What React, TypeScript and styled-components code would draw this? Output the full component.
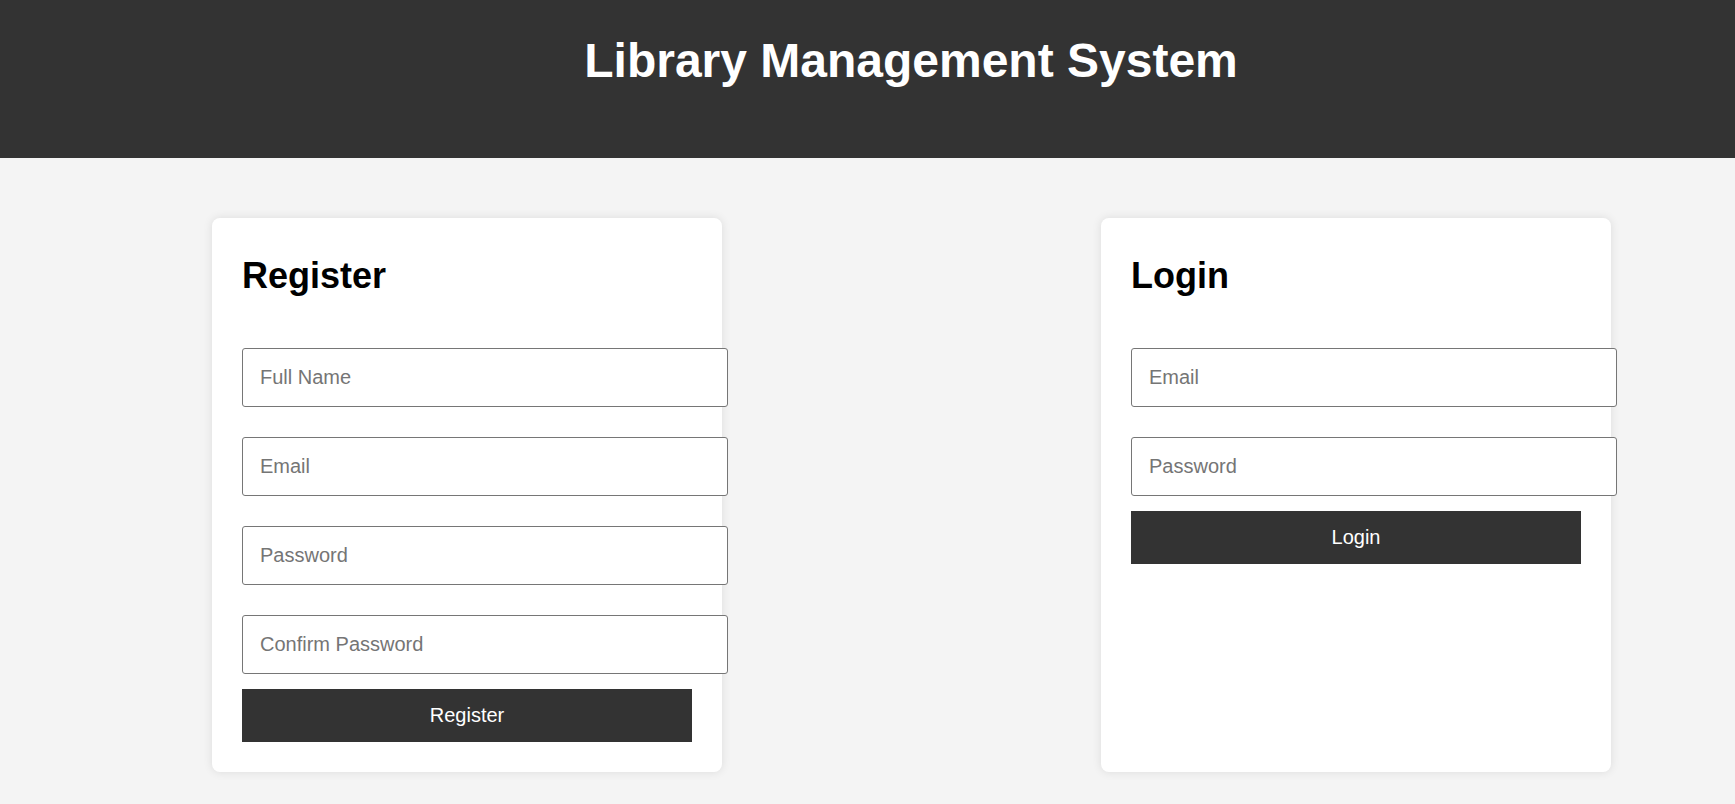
import React from "react";
import styled, { createGlobalStyle } from "styled-components";

const GlobalStyle = createGlobalStyle`
  html, body {
    margin: 0;
    padding: 0;
    background: #f4f4f4;
    font-family: "Liberation Sans", Arial, sans-serif;
  }
  * { box-sizing: content-box; }
`;

const Page = styled.div`
  min-height: 804px;
  background: #f4f4f4;
  overflow: hidden;
`;

const Header = styled.header`
  background: #333333;
  color: #ffffff;
  text-align: center;
  padding: 33px 0 70px 87px;
`;

const Title = styled.h1`
  margin: 0;
  font-size: 48px;
  font-weight: 700;
  line-height: normal;
`;

const Main = styled.main`
  display: flex;
  justify-content: space-between;
  align-items: stretch;
  padding: 60px 124px 0 212px;
`;

const Card = styled.section`
  width: 450px;
  padding: 30px;
  background: #ffffff;
  border-radius: 8px;
  box-shadow: 0 0 10px rgba(0, 0, 0, 0.1);
`;

const CardTitle = styled.h2`
  margin: 7px 0 36px;
  font-size: 36px;
  font-weight: 700;
  line-height: normal;
  color: #000000;
`;

const Form = styled.form`
  display: flex;
  flex-direction: column;
  align-items: flex-start;
`;

const Input = styled.input`
  display: block;
  width: 450px;
  margin: 15px 0;
  padding: 16px 17px;
  font-family: "Liberation Sans", Arial, sans-serif;
  font-size: 20px;
  line-height: 25px;
  color: #000;
  background: #fff;
  border: 1px solid #767676;
  border-radius: 3px;
  outline: none;
  &::placeholder {
    color: #757575;
  }
`;

const Button = styled.button`
  display: block;
  width: 450px;
  margin: 0;
  padding: 15px 0;
  box-sizing: border-box;
  height: 53px;
  background: #333333;
  color: #ffffff;
  border: none;
  border-radius: 0;
  font-family: "Liberation Sans", Arial, sans-serif;
  font-size: 20px;
  line-height: 23px;
  cursor: pointer;
`;

export default function App() {
  return (
    <Page>
      <GlobalStyle />
      <Header>
        <Title>Library Management System</Title>
      </Header>
      <Main>
        <Card>
          <CardTitle>Register</CardTitle>
          <Form onSubmit={(e) => e.preventDefault()}>
            <Input type="text" placeholder="Full Name" />
            <Input type="email" placeholder="Email" />
            <Input type="password" placeholder="Password" />
            <Input type="password" placeholder="Confirm Password" />
            <Button type="submit">Register</Button>
          </Form>
        </Card>
        <Card>
          <CardTitle>Login</CardTitle>
          <Form onSubmit={(e) => e.preventDefault()}>
            <Input type="email" placeholder="Email" />
            <Input type="password" placeholder="Password" />
            <Button type="submit">Login</Button>
          </Form>
        </Card>
      </Main>
    </Page>
  );
}
